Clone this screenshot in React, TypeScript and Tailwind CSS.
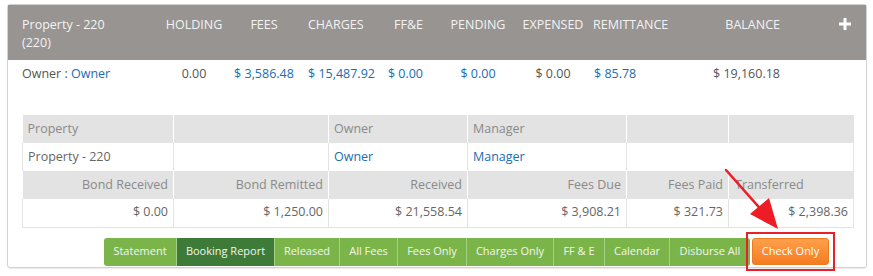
const headers = [
  { label: "HOLDING", cls: "text-center" },
  { label: "FEES", cls: "text-center" },
  { label: "CHARGES", cls: "text-left pl-[8px]" },
  { label: "FF&E", cls: "text-right pr-[17px]" },
  { label: "PENDING", cls: "text-center" },
  { label: "EXPENSED", cls: "text-center" },
  { label: "REMITTANCE", cls: "text-left pl-[3px]" },
  { label: "BALANCE", cls: "text-right pr-[20px]" },
];

const values = [
  { v: "0.00", link: false, cls: "text-center" },
  { v: "$ 3,586.48", link: true, cls: "text-center" },
  { v: "$ 15,487.92", link: true, cls: "text-left pl-[8px]" },
  { v: "$ 0.00", link: true, cls: "text-right pr-[17px]" },
  { v: "$ 0.00", link: true, cls: "text-center" },
  { v: "$ 0.00", link: false, cls: "text-center" },
  { v: "$ 85.78", link: true, cls: "text-left pl-[4px]" },
  { v: "$ 19,160.18", link: false, cls: "text-right pr-[20px]" },
];

const cols = "grid grid-cols-[152px_68px_72px_83px_57px_76px_74px_100px_110px_1fr]";

const buttons = [
  { label: "Statement", w: "w-[72px]" },
  { label: "Booking Report", w: "w-[98px]", active: true },
  { label: "Released", w: "w-[65px]" },
  { label: "All Fees", w: "w-[58px]" },
  { label: "Fees Only", w: "w-[69px]" },
  { label: "Charges Only", w: "w-[87px]" },
  { label: "FF & E", w: "w-[51px]" },
  { label: "Calendar", w: "w-[65px]" },
  { label: "Disburse All", w: "w-[81px]" },
];

const grayCell = "h-[28px] px-[5px] bg-[#e3e3e3] border-r border-white text-[#8a8a8a] font-normal";
const whiteCell = "h-[28px] px-[5px] bg-white border-r border-[#e3e3e3]";

function PlusIcon() {
  return (
    <svg width="12" height="12" viewBox="0 0 12 12">
      <rect x="4.5" y="0" width="3" height="12" fill="#fff" />
      <rect x="0" y="4.5" width="12" height="3" fill="#fff" />
    </svg>
  );
}

export default function App() {
  return (
    <div className="relative w-[873px] h-[276px] bg-white pt-[4px] pl-[7px] font-['Open_Sans',sans-serif] text-[12.5px]">
      <div className="w-[860px] border border-[#d2d2d2] rounded-[3px] shadow-[0_1px_1px_rgba(0,0,0,0.08)]">
        {/* summary header */}
        <div className={`${cols} h-[55px] bg-[#989492] text-[#f3f3f3] leading-[18px] pt-[11px]`}>
          <div className="pl-[14px]">
            Property - 220
            <br />
            (220)
          </div>
          {headers.map((h) => (
            <div key={h.label} className={h.cls}>
              {h.label}
            </div>
          ))}
          <div className="flex justify-center pt-[2px] pl-[24px]">
            <PlusIcon />
          </div>
        </div>

        {/* owner row */}
        <div className={`${cols} leading-[18px] pt-[5px] text-[#555]`}>
          <div className="pl-[14px]">
            Owner : <span className="text-[#1b6cb0]">Owner</span>
          </div>
          {values.map((c, i) => (
            <div key={i} className={`${c.cls} ${c.link ? "text-[#1b6cb0]" : "text-[#555]"}`}>
              {c.v}
            </div>
          ))}
          <div />
        </div>

        {/* detail table */}
        <div className="pl-[14px] pt-[32px]">
          <table className="w-[831px] table-fixed border-collapse">
            <colgroup>
              <col className="w-[151px]" />
              <col className="w-[155px]" />
              <col className="w-[139px]" />
              <col className="w-[159px]" />
              <col className="w-[102px]" />
              <col className="w-[125px]" />
            </colgroup>
            <tbody>
              <tr className="text-left">
                <th className={grayCell + " text-left"}>Property</th>
                <th className={grayCell}></th>
                <th className={grayCell + " text-left"}>Owner</th>
                <th className={grayCell + " text-left"}>Manager</th>
                <th className={grayCell}></th>
                <th className={grayCell + " border-r-0"}></th>
              </tr>
              <tr className="text-[#666]">
                <td className={whiteCell + " border-l"}>Property - 220</td>
                <td className={whiteCell}></td>
                <td className={whiteCell + " text-[#1b6cb0]"}>Owner</td>
                <td className={whiteCell + " text-[#1b6cb0]"}>Manager</td>
                <td className={whiteCell + " border-r-0"}></td>
                <td className={whiteCell}></td>
              </tr>
              <tr>
                <th className={grayCell + " text-right"}>Bond Received</th>
                <th className={grayCell + " text-right"}>Bond Remitted</th>
                <th className={grayCell + " text-right"}>Received</th>
                <th className={grayCell + " text-right"}>Fees Due</th>
                <th className={grayCell + " text-right"}>Fees Paid</th>
                <th className={grayCell + " text-left pl-[6px] border-r-0"}>Transferred</th>
              </tr>
              <tr className="text-[#666] text-right border-b border-[#e3e3e3]">
                <td className={whiteCell + " border-l"}>$ 0.00</td>
                <td className={whiteCell}>$ 1,250.00</td>
                <td className={whiteCell}>$ 21,558.54</td>
                <td className={whiteCell}>$ 3,908.21</td>
                <td className={whiteCell}>$ 321.73</td>
                <td className={whiteCell}>$ 2,398.36</td>
              </tr>
            </tbody>
          </table>
        </div>

        {/* action buttons */}
        <div className="flex items-center pl-[96px] pt-[10px] pb-px text-[11px]">
          <div className="flex h-[28px] rounded-[3px] overflow-hidden">
            {buttons.map((b, i) => (
              <div
                key={b.label}
                className={`${b.w} flex items-center justify-center text-[#f1f6ec] ${
                  b.active ? "bg-[#3e7b38]" : "bg-[#7bb54a]"
                } ${i > 0 ? "border-l border-[#a5d186]" : ""}`}
              >
                {b.label}
              </div>
            ))}
          </div>
          <div className="relative ml-[2px]">
            <div className="w-[77px] h-[27px] flex items-center justify-center rounded-[3px] border border-[#ec7a20] bg-gradient-to-b from-[#ffa04a] to-[#f57b1f] text-white">
              Check Only
            </div>
            <div className="absolute -inset-[6px] border-2 border-[#e8202a]" />
          </div>
        </div>
      </div>

      {/* red annotation arrow */}
      <svg className="absolute left-0 top-0 pointer-events-none" width="873" height="276">
        <line x1="726" y1="170" x2="764" y2="213" stroke="#ee1c25" strokeWidth="2.5" strokeLinecap="round" />
        <polygon points="778,229 750,214 769,198" fill="#ee1c25" />
      </svg>
    </div>
  );
}
